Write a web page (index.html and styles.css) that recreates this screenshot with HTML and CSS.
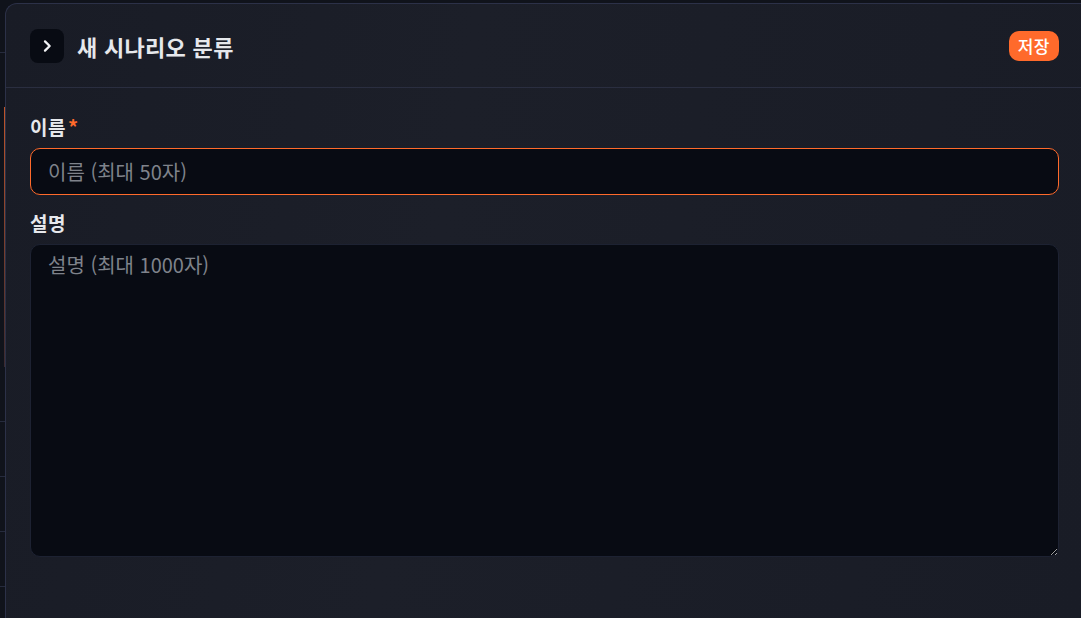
FILE: index.html
```html
<!DOCTYPE html>
<html lang="ko">
<head>
    <meta charset="UTF-8">
    <meta name="viewport" content="width=device-width, initial-scale=1.0">
    <title>새 시나리오 분류</title>
    <link rel="stylesheet" href="styles.css">
</head>
<body>
    <div class="layout">
        <div class="backdrop">
            <div class="row-line"></div>
            <div class="row-line active"></div>
            <div class="row-line"></div>
            <div class="row-line"></div>
            <div class="row-line"></div>
            <div class="row-line"></div>
        </div>

        <aside class="drawer">
            <header class="drawer-header">
                <div class="title-group">
                    <button class="collapse-button" aria-label="닫기">
                        <svg width="16" height="16" viewBox="0 0 24 24" fill="none" stroke="currentColor" stroke-width="3.4" stroke-linecap="round" stroke-linejoin="round"><path d="M9 5l7 7-7 7"/></svg>
                    </button>
                    <h1>새 시나리오 분류</h1>
                </div>
                <button class="save-button">저장</button>
            </header>

            <form class="drawer-body">
                <div class="form-group">
                    <label for="name">이름<span class="required">*</span></label>
                    <input type="text" id="name" class="focused" placeholder="이름 (최대 50자)">
                </div>
                <div class="form-group">
                    <label for="description">설명</label>
                    <textarea id="description" placeholder="설명 (최대 1000자)"></textarea>
                </div>
            </form>
        </aside>
    </div>
</body>
</html>
```

FILE: styles.css
```css
* {
    margin: 0;
    padding: 0;
    box-sizing: border-box;
    font-family: 'Noto Sans CJK KR', 'Noto Sans', sans-serif;
}

:root {
    --primary-color: #ff6a2b;
    --panel-color: #1a1d27;
    --field-color: #080b13;
    --border-color: #2c3148;
    --text-color: #e6e8ec;
    --muted-color: #7f838b;
}

body {
    background-color: #10131b;
    color: var(--text-color);
    height: 618px;
    overflow: hidden;
}

.layout {
    display: flex;
    height: 100%;
}

.backdrop {
    width: 5px;
    display: flex;
    flex-direction: column;
    padding-top: 52px;
    gap: 54px;
}

.row-line {
    height: 1px;
    background-color: #262b3d;
}

.row-line.active {
    height: 260px;
    background: linear-gradient(to bottom, #c0562a, #3a2a30);
    width: 1px;
    margin-left: 4px;
}

.drawer {
    flex: 1;
    margin-top: 3px;
    background: linear-gradient(100deg, #191c26 0%, #1c1f29 40%, #191c26 100%);
    border-top: 1px solid var(--border-color);
    border-left: 1px solid var(--border-color);
    border-top-left-radius: 12px;
    display: flex;
    flex-direction: column;
}

.drawer-header {
    height: 84px;
    display: flex;
    justify-content: space-between;
    align-items: center;
    padding: 0 22px 0 24px;
    border-bottom: 1px solid #2a2e40;
}

.title-group {
    display: flex;
    align-items: center;
    gap: 13px;
}

.collapse-button {
    width: 34px;
    height: 34px;
    border: none;
    border-radius: 8px;
    background-color: var(--field-color);
    color: #f2f3f5;
    display: flex;
    align-items: center;
    justify-content: center;
}

h1 {
    font-size: 22px;
    font-weight: 700;
    color: var(--text-color);
    letter-spacing: 0.3px;
}

.save-button {
    height: 30px;
    padding: 0 9px;
    border: none;
    border-radius: 10px;
    background-color: var(--primary-color);
    color: white;
    font-size: 17px;
    font-weight: 500;
    letter-spacing: 0.5px;
}

.drawer-body {
    padding: 27px 22px 0 24px;
    display: flex;
    flex-direction: column;
    gap: 16px;
}

.form-group {
    display: flex;
    flex-direction: column;
    gap: 9px;
}

label {
    font-size: 19px;
    font-weight: 700;
    line-height: 24px;
    letter-spacing: 0.5px;
    color: var(--text-color);
}

.required {
    color: var(--primary-color);
    margin-left: 2px;
    font-size: 20px;
}

input,
textarea {
    width: 100%;
    background-color: var(--field-color);
    border: 1px solid #1d2232;
    border-radius: 10px;
    color: var(--text-color);
    font-size: 20px;
    padding: 0 17px;
    outline: none;
}

input {
    height: 47px;
}

input.focused {
    border-color: var(--primary-color);
}

textarea {
    height: 313px;
    padding-top: 6px;
    line-height: 1.4;
    resize: vertical;
}

input::placeholder,
textarea::placeholder {
    color: var(--muted-color);
}
```
